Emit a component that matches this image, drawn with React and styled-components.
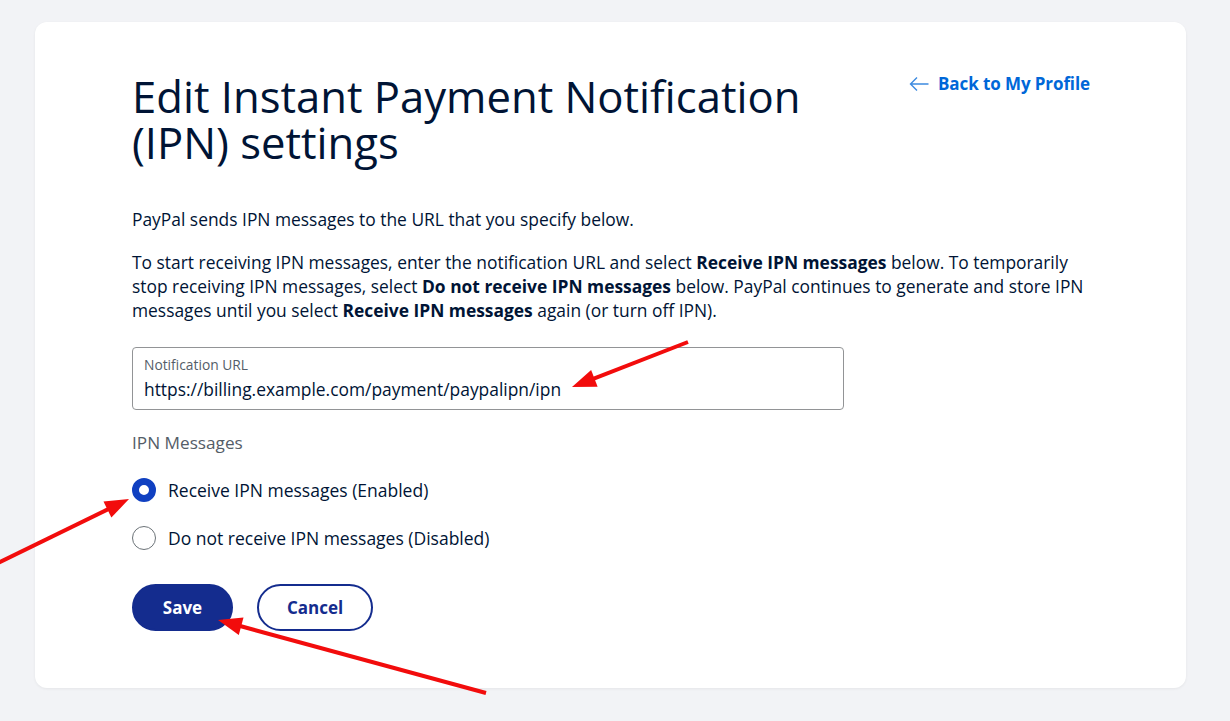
import React from "react";
import styled, { createGlobalStyle } from "styled-components";

const GlobalStyle = createGlobalStyle`
  body {
    margin: 0;
    background: #f2f3f6;
    font-family: "Open Sans", "Noto Sans", sans-serif;
    color: #001435;
  }
`;

const Page = styled.div`
  position: relative;
  width: 1230px;
  height: 721px;
  padding: 22px 44px 0 35px;
  box-sizing: border-box;
`;

const Card = styled.div`
  background: #fff;
  border-radius: 12px;
  height: 666px;
  box-shadow: 0 1px 3px rgba(0, 0, 0, 0.06);
  padding: 51px 96px 0 97px;
  box-sizing: border-box;
`;

const Header = styled.div`
  display: flex;
  justify-content: space-between;
  align-items: flex-start;
`;

const Title = styled.h1`
  margin: 0;
  max-width: 700px;
  font-size: 43.6px;
  line-height: 46px;
  font-weight: 400;
  color: #001435;
`;

const BackLink = styled.a`
  display: flex;
  align-items: center;
  gap: 9px;
  margin-top: -1px;
  font-size: 17px;
  font-weight: 700;
  letter-spacing: -0.1px;
  color: #0067d8;
  text-decoration: none;
`;

const Text = styled.p`
  margin: ${(p) => p.$top || 0}px 0 0;
  max-width: 962px;
  font-size: 17.4px;
  line-height: 24px;
  b {
    font-weight: 700;
  }
`;

const Field = styled.div`
  margin-top: 25px;
  width: 712px;
  height: 63px;
  box-sizing: border-box;
  border: 1px solid #929496;
  border-radius: 4px;
  padding: 9px 11px 0;
`;

const FieldLabel = styled.div`
  font-size: 13.8px;
  line-height: 16px;
  color: #545d68;
`;

const FieldValue = styled.div`
  margin-top: 5px;
  font-size: 17.4px;
  line-height: 22px;
  color: #001435;
`;

const GroupLabel = styled.div`
  margin-top: 23px;
  font-size: 17.2px;
  line-height: 20px;
  color: #545d68;
`;

const Options = styled.div`
  display: flex;
  flex-direction: column;
  gap: 24px;
  margin-top: 25px;
`;

const Option = styled.label`
  display: flex;
  align-items: center;
  gap: 12px;
  font-size: 17.5px;
  line-height: 24px;
`;

const Radio = styled.span`
  width: 24px;
  height: 24px;
  box-sizing: border-box;
  border-radius: 50%;
  border: ${(p) => (p.$checked ? "7px solid #1040c1" : "1px solid #6c7378")};
  background: #fff;
`;

const Actions = styled.div`
  display: flex;
  gap: 24px;
  margin-top: 34px;
`;

const Button = styled.button`
  height: 47px;
  width: ${(p) => (p.$primary ? 101 : 116)}px;
  padding: 0;
  border-radius: 24px;
  border: 2px solid #142c8e;
  background: ${(p) => (p.$primary ? "#142c8e" : "#fff")};
  color: ${(p) => (p.$primary ? "#fff" : "#142c8e")};
  font-family: inherit;
  font-size: 17px;
  font-weight: 700;
`;

const Overlay = styled.svg`
  position: absolute;
  left: 0;
  top: 0;
  pointer-events: none;
`;

function Arrow({ x1, y1, x2, y2 }) {
  const dx = x2 - x1;
  const dy = y2 - y1;
  const len = Math.hypot(dx, dy);
  const ux = dx / len;
  const uy = dy / len;
  const head = 24;
  const half = 9;
  const bx = x2 - ux * head;
  const by = y2 - uy * head;
  const pts = `${x2},${y2} ${bx - uy * half},${by + ux * half} ${bx + uy * half},${by - ux * half}`;
  return (
    <g>
      <line x1={x1} y1={y1} x2={bx + ux * 2} y2={by + uy * 2} stroke="#f20c0c" strokeWidth="4" />
      <polygon points={pts} fill="#f20c0c" />
    </g>
  );
}

export default function App() {
  return (
    <>
      <GlobalStyle />
      <Page>
        <Card>
          <Header>
            <Title>Edit Instant Payment Notification (IPN) settings</Title>
            <BackLink href="#">
              <svg width="20" height="16" viewBox="0 0 20 16" fill="none" stroke="#3d8ae0" strokeWidth="1.4">
                <path d="M19.5 8H1.5M8 1.5L1.5 8l6.5 6.5" />
              </svg>
              Back to My Profile
            </BackLink>
          </Header>
          <Text $top={42}>PayPal sends IPN messages to the URL that you specify below.</Text>
          <Text $top={19}>
            To start receiving IPN messages, enter the notification URL and select <b>Receive IPN messages</b> below. To temporarily
            stop receiving IPN messages, select <b>Do not receive IPN messages</b> below. PayPal continues to generate and store IPN
            messages until you select <b>Receive IPN messages</b> again (or turn off IPN).
          </Text>
          <Field>
            <FieldLabel>Notification URL</FieldLabel>
            <FieldValue>https://billing.example.com/payment/paypalipn/ipn</FieldValue>
          </Field>
          <GroupLabel>IPN Messages</GroupLabel>
          <Options>
            <Option>
              <Radio $checked />
              Receive IPN messages (Enabled)
            </Option>
            <Option>
              <Radio />
              Do not receive IPN messages (Disabled)
            </Option>
          </Options>
          <Actions>
            <Button $primary>Save</Button>
            <Button>Cancel</Button>
          </Actions>
        </Card>
        <Overlay width="1230" height="721">
          <Arrow x1={688} y1={342} x2={572} y2={387} />
          <Arrow x1={-2} y1={563} x2={129} y2={499} />
          <Arrow x1={486} y1={693} x2={218} y2={620} />
        </Overlay>
      </Page>
    </>
  );
}
